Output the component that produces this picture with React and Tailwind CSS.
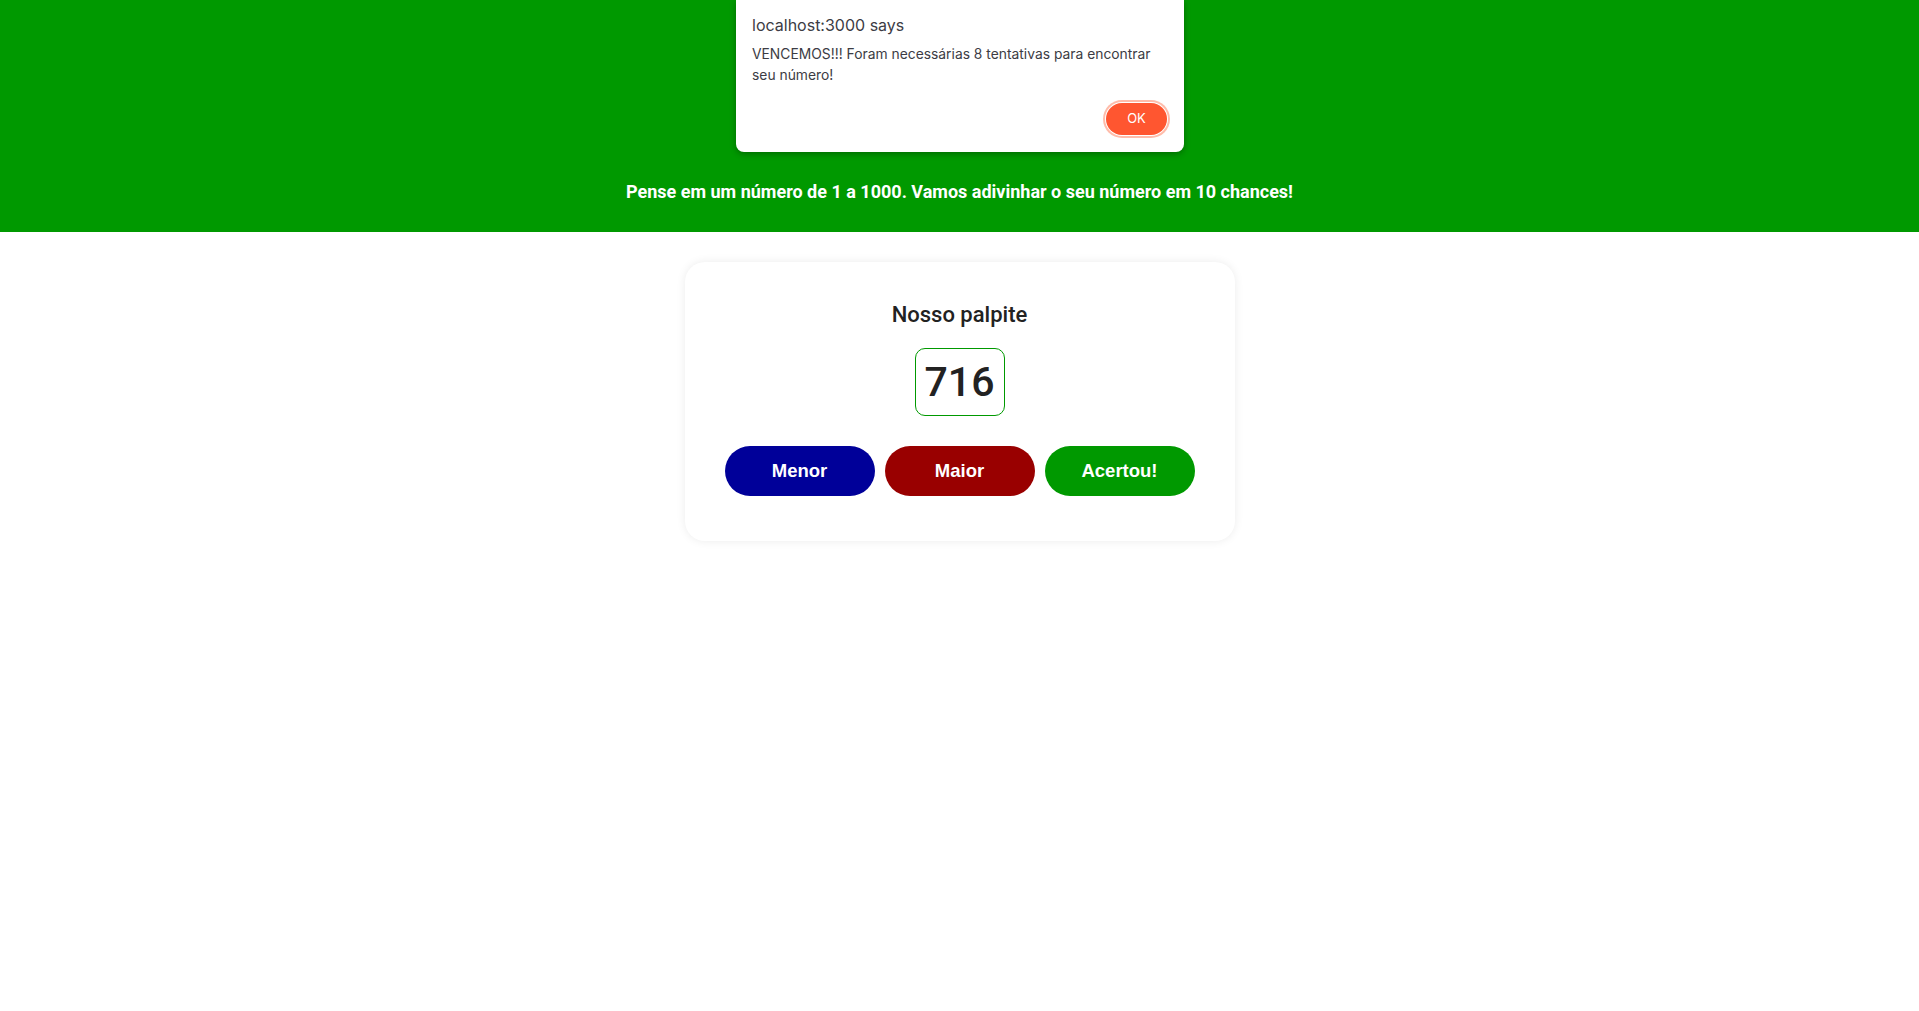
import { useState } from "react";

export default function App() {
  const [guess] = useState(716);

  return (
    <div className="min-h-screen bg-white relative" style={{ fontFamily: "Roboto, 'Liberation Sans', sans-serif" }}>
      {/* Header */}
      <header className="bg-[#009900] h-[232px] flex flex-col justify-end items-center pb-[27px]">
        <p className="text-white font-bold text-[18px] leading-[27px] font-['Roboto',sans-serif]">
          Pense em um número de 1 a 1000. Vamos adivinhar o seu número em 10 chances!
        </p>
      </header>

      {/* Card */}
      <main className="flex justify-center pt-[30px]">
        <div className="w-[550px] h-[279px] bg-white rounded-[20px] shadow-[0_0_10px_rgba(0,0,0,0.08)] flex flex-col items-center pt-[39px]">
          <h2 className="text-[22px] font-medium text-[#222] leading-[28px]">Nosso palpite</h2>

          <div className="mt-[19px] w-[90px] h-[68px] border border-[#009900] rounded-[10px] flex items-center justify-center">
            <span className="text-[41px] font-medium text-[#222] leading-none">{guess}</span>
          </div>

          <div className="mt-[30px] flex gap-[10px] font-['Liberation_Sans',Arial,sans-serif]">
            <button className="w-[150px] h-[50px] rounded-full bg-[#000099] text-white font-bold text-[18.5px]">
              Menor
            </button>
            <button className="w-[150px] h-[50px] rounded-full bg-[#990000] text-white font-bold text-[18.5px]">
              Maior
            </button>
            <button className="w-[150px] h-[50px] rounded-full bg-[#009900] text-white font-bold text-[18.5px]">
              Acertou!
            </button>
          </div>
        </div>
      </main>

      {/* Browser alert */}
      <div className="absolute top-0 left-[736px] w-[448px] h-[152px] bg-white rounded-b-[8px] shadow-[0_2px_6px_rgba(0,0,0,0.3)] px-[16px] pt-[13px] font-['Inter',sans-serif]">
        <p className="text-[16px] text-[#3c3c44] leading-[24px]">localhost:3000 says</p>
        <p className="mt-[7px] text-[13.85px] text-[#3c3c44] leading-[21px] pr-[10px]">
          VENCEMOS!!! Foram necessárias 8 tentativas para encontrar seu número!
        </p>
        <div className="flex justify-end mt-[17px] pr-[1px]">
          <button className="w-[61px] h-[32px] rounded-full bg-[#ff5630] text-white text-[13px] ring-2 ring-[#ffbcaa] ring-offset-1">
            OK
          </button>
        </div>
      </div>
    </div>
  );
}
